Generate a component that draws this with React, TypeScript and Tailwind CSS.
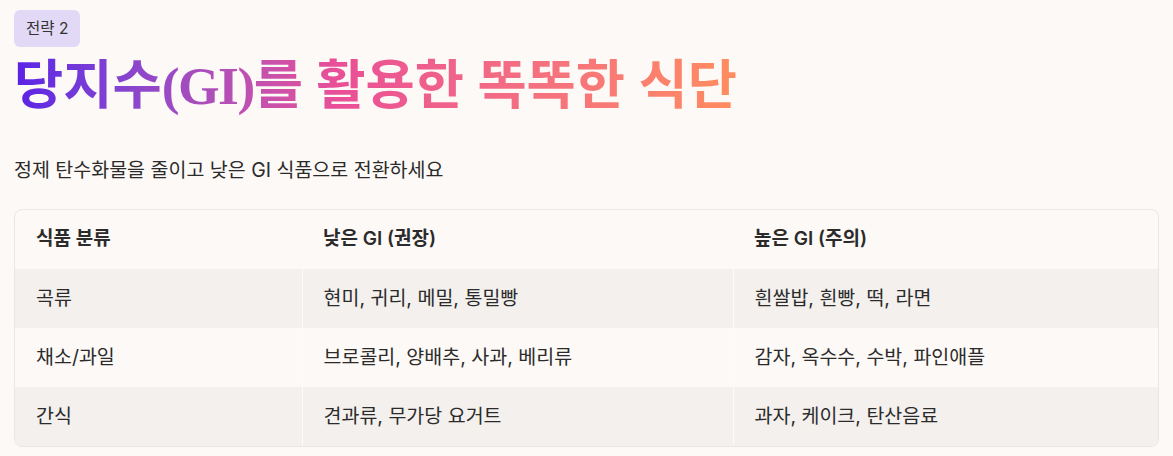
import React from "react";

const rows = [
  ["곡류", "현미, 귀리, 메밀, 통밀빵", "흰쌀밥, 흰빵, 떡, 라면"],
  ["채소/과일", "브로콜리, 양배추, 사과, 베리류", "감자, 옥수수, 수박, 파인애플"],
  ["간식", "견과류, 무가당 요거트", "과자, 케이크, 탄산음료"],
];

export default function App() {
  return (
    <div
      className="min-h-[456px] w-full bg-[#fdf9f6] px-[14px] pt-[10px] text-[#2b2b2b]"
      style={{ fontFamily: 'Inter, "Noto Sans CJK KR", sans-serif' }}
    >
      <div className="inline-flex h-[37px] items-center rounded-md bg-[#e1d9f6] px-[12px] text-[15.5px] text-[#333]">
        전략 2
      </div>
      <div className="mt-[7px]">
        <h1
          className="inline-block bg-gradient-to-r from-[#5a1fe6] via-[#ea4f97] via-45% to-[#ff8c5e] bg-clip-text pb-[6px] text-[53.5px] font-bold leading-[65px] text-transparent"
          style={{ fontFamily: '"Liberation Serif", "Noto Sans CJK KR", serif' }}
        >
          당지수<span className="tracking-[-1.5px]">(GI)</span>를 활용한 똑똑한 식단
        </h1>
      </div>
      <p className="mt-[31px] text-[19.5px] leading-[28px] text-[#2b2b2b]">
        정제 탄수화물을 줄이고 낮은 GI 식품으로 전환하세요
      </p>
      <div className="mt-[25px] overflow-hidden rounded-lg border border-[#ebe6e1]">
        <table className="w-full table-fixed border-collapse text-[19.5px]">
          <colgroup>
            <col className="w-[287px]" />
            <col className="w-[431px]" />
            <col />
          </colgroup>
          <thead>
            <tr className="h-[59px] text-left text-[19px]">
              <th className="px-[21px] font-semibold">식품 분류</th>
              <th className="px-[21px] font-semibold">낮은 GI (권장)</th>
              <th className="px-[21px] font-semibold">높은 GI (주의)</th>
            </tr>
          </thead>
          <tbody>
            {rows.map((r, i) => (
              <tr
                key={i}
                className={
                  i % 2 === 0 ? "h-[59px] bg-[#f3f0ed]" : "h-[59px] bg-[#fdf9f6]"
                }
              >
                <td className="px-[21px]">{r[0]}</td>
                <td className="border-l border-[#fdfaf8] px-[21px]">{r[1]}</td>
                <td className="border-l border-[#fdfaf8] px-[21px]">{r[2]}</td>
              </tr>
            ))}
          </tbody>
        </table>
      </div>
    </div>
  );
}
